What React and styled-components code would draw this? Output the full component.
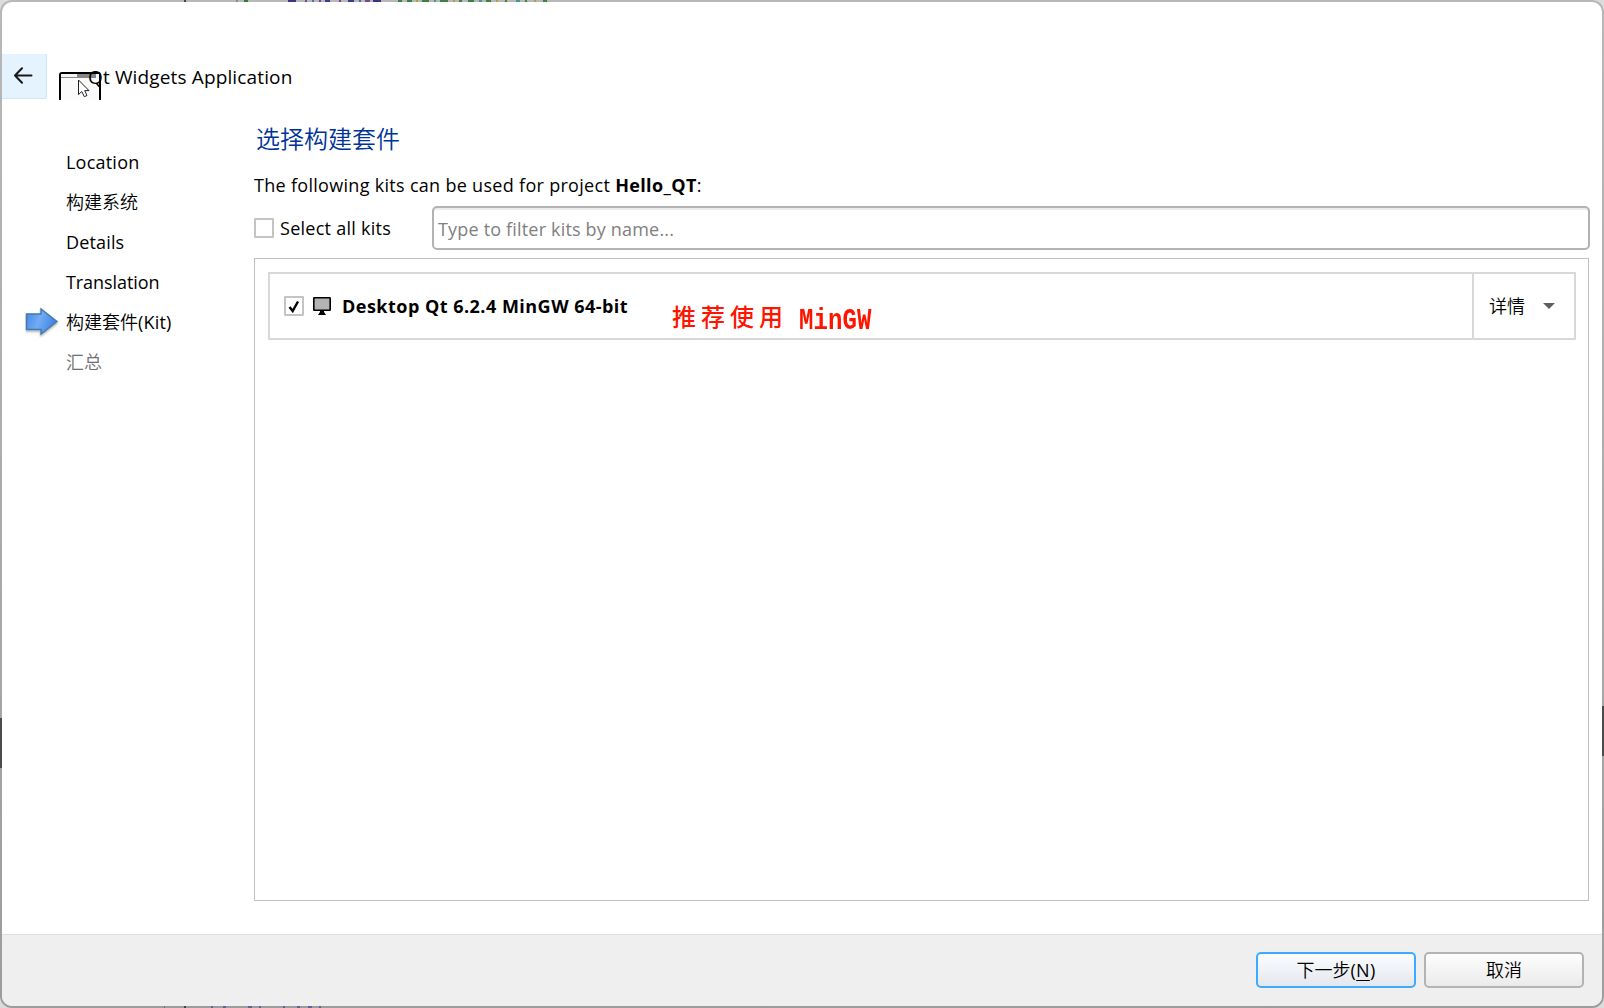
import React from "react";
import styled, { createGlobalStyle } from "styled-components";

const Global = createGlobalStyle`
  *, *::before, *::after { box-sizing: border-box; }
  html, body { margin: 0; background: #dcdcdc; overflow: hidden; }
  body { font-family: "Open Sans", "Noto Sans CJK SC", sans-serif; font-size: 18px; color: #000; }
  button, input { font: inherit; color: inherit; }
`;

const Desktop = styled.div`
  position: relative;
  width: 1604px;
  height: 1008px;
  padding: 2px;
  border-radius: 12px;
  overflow: hidden;
  background:
    linear-gradient(#4b4b4b, #4b4b4b) 0 718px / 2px 50px no-repeat,
    linear-gradient(#4b4b4b, #4b4b4b) 100% 706px / 2px 50px no-repeat,
    linear-gradient(#b8b8b8, #a8a8a8 60%, #9c9c9c);
`;

const EdgeMarks = styled.svg`
  position: absolute;
  left: 0;
  ${(p) => (p.$bottom ? "bottom: 0;" : "top: 0;")}
`;

const Dialog = styled.div`
  display: flex;
  flex-direction: column;
  height: 1004px;
  padding-top: 52px;
  border-radius: 10px;
  overflow: hidden;
  background: #fff;
`;

const Header = styled.header`
  display: flex;
  height: 46px;
`;

const BackButton = styled.button`
  display: flex;
  align-items: center;
  justify-content: center;
  width: 45px;
  height: 45px;
  padding: 0 2px 0 0;
  border: solid #cce8ff;
  border-width: 0 1px 1px 0;
  border-radius: 0 0 3px 0;
  background: #e5f3ff;
`;

const WizardIcon = styled.svg`
  flex: none;
  margin: 18px 0 0 12px;
`;

const Title = styled.h1`
  position: relative;
  margin: 9px 0 0 -13px;
  font-size: 19px;
  font-weight: 400;
  line-height: 28px;
  white-space: nowrap;
  letter-spacing: ${(p) => p.$tracking}px;
`;

const Body = styled.div`
  display: flex;
  flex: 1;
`;

const Sidebar = styled.nav`
  width: 252px;
  padding-top: 42px;
`;

const Step = styled.div`
  display: flex;
  align-items: center;
  height: 40px;
  padding-left: 23px;
  font-weight: ${(p) => (p.$cjk ? 350 : 400)};
  color: ${(p) => (p.$muted ? "#707070" : "#000")};
`;

const StepMarker = styled.span`
  display: flex;
  width: 41px;
`;

const Tracked = styled.span`
  white-space: nowrap;
  letter-spacing: ${(p) => p.$tracking || 0}px;
`;

const StepLabel = styled(Tracked)`
  padding-bottom: ${(p) => (p.$cjk ? 2 : 0)}px;
`;

const Main = styled.main`
  width: 1336px;
  padding-top: 22px;
`;

const Heading = styled.h2`
  margin: 0 0 0 2px;
  font-size: 24px;
  font-weight: 350;
  line-height: 34px;
  color: #003399;
`;

const Intro = styled.p`
  margin: 15px 0 6px;
  line-height: 29px;
`;

const FilterRow = styled.div`
  display: flex;
  align-items: center;
  height: 44px;
`;

const SelectAll = styled.label`
  display: flex;
  align-items: center;
  gap: 6px;
  width: 178px;
`;

const Box = styled.span`
  display: flex;
  flex: none;
  align-items: center;
  justify-content: center;
  width: 20px;
  height: 20px;
  border: 2px solid #c4c4c4;
  border-radius: 1px;
  background: #fff;
`;

const FilterInput = styled.input`
  width: 1158px;
  height: 44px;
  padding: 2px 4px 0;
  border: 2px solid #b3b3b3;
  border-radius: 5px;
  outline: none;
  background: #fff;
  box-shadow: inset 0 2px #ececec;
  letter-spacing: ${(p) => p.$tracking}px;
  &::placeholder { color: #808080; opacity: 1; }
`;

const KitList = styled.section`
  width: 1335px;
  height: 643px;
  margin-top: 8px;
  padding: 13px;
  border: 1px solid #c0c0c0;
`;

const KitCard = styled.div`
  display: flex;
  width: 1308px;
  height: 68px;
  border: 2px solid #d8d8d8;
`;

const KitInfo = styled.div`
  display: flex;
  flex: 1;
  align-items: center;
  padding-left: 14px;
`;

const KitIcon = styled.svg`
  flex: none;
  margin: 0 11px 0 9px;
`;

const KitName = styled.strong`
  width: 330px;
  font-weight: 700;
  white-space: nowrap;
  letter-spacing: ${(p) => p.$tracking}px;
`;

const Note = styled.span`
  display: flex;
  align-items: center;
  gap: 11px;
  padding-top: 22px;
  font-size: 24px;
  font-weight: 500;
  line-height: 24px;
  letter-spacing: 5px;
  white-space: nowrap;
  color: #ff1400;
`;

const NoteLatin = styled.span`
  display: inline-block;
  padding-top: 7px;
  font-family: "Liberation Mono", monospace;
  font-weight: 700;
  letter-spacing: 0.1px;
  transform: scaleY(1.2);
`;

const Details = styled.button`
  display: flex;
  align-items: center;
  gap: 17px;
  width: 102px;
  padding: 0 0 0 16px;
  border: 0;
  border-left: 2px solid #d8d8d8;
  background: #fff;
  font-weight: 350;
`;

const DetailsLabel = styled.span`
  margin: -2px 1px 0 -1px;
`;

const Footer = styled.footer`
  display: flex;
  justify-content: flex-end;
  gap: 8px;
  height: 72px;
  padding: 17px 18px 0 0;
  border-top: 1px solid #dfdfdf;
  background: #efefef;
`;

const FooterButton = styled.button`
  display: flex;
  align-items: center;
  justify-content: center;
  width: 160px;
  height: 36px;
  padding: 0 0 3px;
  border: 2px solid ${(p) => (p.$primary ? "#3fa9ff" : "#b3b3b3")};
  border-radius: 5px;
  background: ${(p) =>
    p.$primary ? "linear-gradient(#fbfdff, #e3e8ed)" : "linear-gradient(#fdfdfd, #ebebeb)"};
  font-weight: 350;
`;

const Regular = styled.span`
  font-weight: 400;
  letter-spacing: 0.2px;
`;

const Mnemonic = styled.u`
  text-underline-offset: 3px;
  text-decoration-thickness: 1px;
`;

const steps = [
  { label: "Location", tracking: 0.22 },
  { label: "构建系统", cjk: true },
  { label: "Details", tracking: 0.15 },
  { label: "Translation", tracking: -0.08 },
  { label: "构建套件", suffix: "(Kit)", cjk: true, current: true },
  { label: "汇总", cjk: true, muted: true },
];

function CurrentArrow() {
  return (
    <svg width="34" height="32" viewBox="0 0 34 32">
      <defs>
        <linearGradient id="arrowFill" x1="0" y1="0" x2="1" y2="0.3">
          <stop offset="0" stopColor="#4285df" />
          <stop offset="0.5" stopColor="#73acf6" />
          <stop offset="1" stopColor="#4285df" />
        </linearGradient>
        <filter id="arrowShadow" x="-20%" y="-20%" width="150%" height="150%">
          <feDropShadow dx="0" dy="1.5" stdDeviation="1.2" floodColor="#000" floodOpacity="0.35" />
        </filter>
      </defs>
      <path
        d="M1.5 8H16V3L32 15.5L16 28V23.5H1.5Z"
        fill="url(#arrowFill)"
        stroke="#4778ae"
        strokeWidth="1.4"
        filter="url(#arrowShadow)"
      />
    </svg>
  );
}

const topMarks = [
  [184, 2, "#444"], [236, 2, "#888"], [244, 4, "#2f7d32"], [288, 8, "#363684"],
  [305, 2, "#754a86"], [312, 2, "#5a6aa5"], [319, 2, "#754a86"], [325, 5, "#3c3c8c"],
  [339, 2, "#754a86"], [348, 6, "#3c3c8c"], [359, 2, "#4a6c9c"], [365, 5, "#754a86"], [373, 8, "#363684"],
  [398, 4, "#3c8044"], [407, 5, "#3c8044"], [416, 2, "#b0a040"], [422, 7, "#3c8044"],
  [434, 2, "#4c9494"], [440, 8, "#3c8044"], [453, 2, "#b0a040"], [459, 3, "#3c8044"],
  [468, 6, "#3c8044"], [479, 3, "#4c9494"], [486, 5, "#3c8044"], [496, 2, "#b0a040"],
  [505, 2, "#3c8044"], [516, 4, "#4c9494"], [525, 2, "#3c8044"], [534, 2, "#b0a040"], [543, 4, "#3c8044"],
];

const bottomMarks = [
  [164, 1, "#777"], [184, 2, "#444"], [211, 2, "#62629a"], [223, 3, "#62629a"],
  [248, 4, "#62629a"], [259, 2, "#62629a"], [283, 2, "#62629a"],
  [297, 3, "#62629a"], [308, 4, "#62629a"], [319, 2, "#62629a"],
];

function Marks({ items, bottom }) {
  return (
    <EdgeMarks $bottom={bottom} width="600" height="2" viewBox="0 0 600 2">
      {items.map(([x, w, fill]) => (
        <rect key={x} x={x} width={w} height="2" fill={fill} />
      ))}
    </EdgeMarks>
  );
}

export default function App() {
  return (
    <>
      <Global />
      <Desktop>
        <Marks items={topMarks} />
        <Marks items={bottomMarks} bottom />
        <Dialog>
          <Header>
            <BackButton aria-label="Back">
              <svg width="20" height="18" viewBox="0 0 20 18" fill="none" stroke="#1a1a1a" strokeWidth="2">
                <path d="M18.5 8.5H2M9 1.2L2 8.5L9 15.8" strokeLinejoin="round" strokeLinecap="round" />
              </svg>
            </BackButton>
            <WizardIcon width="42" height="28" viewBox="0 0 42 28">
              <path d="M1 28V3Q1 1 3 1H39Q41 1 41 3V28" fill="#fafafa" stroke="#000" strokeWidth="2" />
              <path d="M2 2H40V5H2Z" fill="#f4f4f4" />
              <path d="M3 1H39" stroke="#000" strokeWidth="2" />
              <path d="M2 5.5H18" stroke="#888" />
              <path d="M18 2H37V6H18Z" fill="#868686" />
              <path d="M19.5 8V22.6L22.8 19.5L25.3 24.7L28 23.5L25.7 18.6H30Z" fill="#fff" stroke="#222" />
            </WizardIcon>
            <Title $tracking={0.14}>Qt Widgets Application</Title>
          </Header>
          <Body>
            <Sidebar>
              {steps.map((s) => (
                <Step key={s.label} $cjk={s.cjk} $muted={s.muted}>
                  <StepMarker>{s.current && <CurrentArrow />}</StepMarker>
                  <StepLabel $tracking={s.tracking} $cjk={s.cjk}>
                    {s.label}
                    {s.suffix && <Regular>{s.suffix}</Regular>}
                  </StepLabel>
                </Step>
              ))}
            </Sidebar>
            <Main>
              <Heading>选择构建套件</Heading>
              <Intro>
                <Tracked $tracking={0.3}>The following kits can be used for project </Tracked>
                <Tracked as="b" $tracking={0.36}>Hello_QT</Tracked>:
              </Intro>
              <FilterRow>
                <SelectAll>
                  <Box />
                  <Tracked $tracking={0.26}>Select all kits</Tracked>
                </SelectAll>
                <FilterInput $tracking={0.18} placeholder="Type to filter kits by name..." />
              </FilterRow>
              <KitList>
                <KitCard>
                  <KitInfo>
                    <Box>
                      <svg width="12" height="13" viewBox="0 0 12 13" fill="none" stroke="#000" strokeWidth="2.4">
                        <path d="M1.5 7L4.7 11L10 1.5" />
                      </svg>
                    </Box>
                    <KitIcon width="18" height="18" viewBox="0 0 18 18">
                      <rect x="0.8" y="0.8" width="16.4" height="12.4" rx="0.5" fill="#b3b3b3" stroke="#000" strokeWidth="1.6" />
                      <path d="M7 13H11V15L13 18H5L7 15Z" />
                    </KitIcon>
                    <KitName $tracking={0.48}>Desktop Qt 6.2.4 MinGW 64-bit</KitName>
                    <Note>
                      推荐使用 <NoteLatin>MinGW</NoteLatin>
                    </Note>
                  </KitInfo>
                  <Details>
                    <DetailsLabel>详情</DetailsLabel>
                    <svg width="12" height="6" viewBox="0 0 12 6">
                      <path d="M0 0H12L6 6Z" fill="#606060" />
                    </svg>
                  </Details>
                </KitCard>
              </KitList>
            </Main>
          </Body>
          <Footer>
            <FooterButton $primary>
              <span>
                下一步<Regular>(<Mnemonic>N</Mnemonic>)</Regular>
              </span>
            </FooterButton>
            <FooterButton>取消</FooterButton>
          </Footer>
        </Dialog>
      </Desktop>
    </>
  );
}
